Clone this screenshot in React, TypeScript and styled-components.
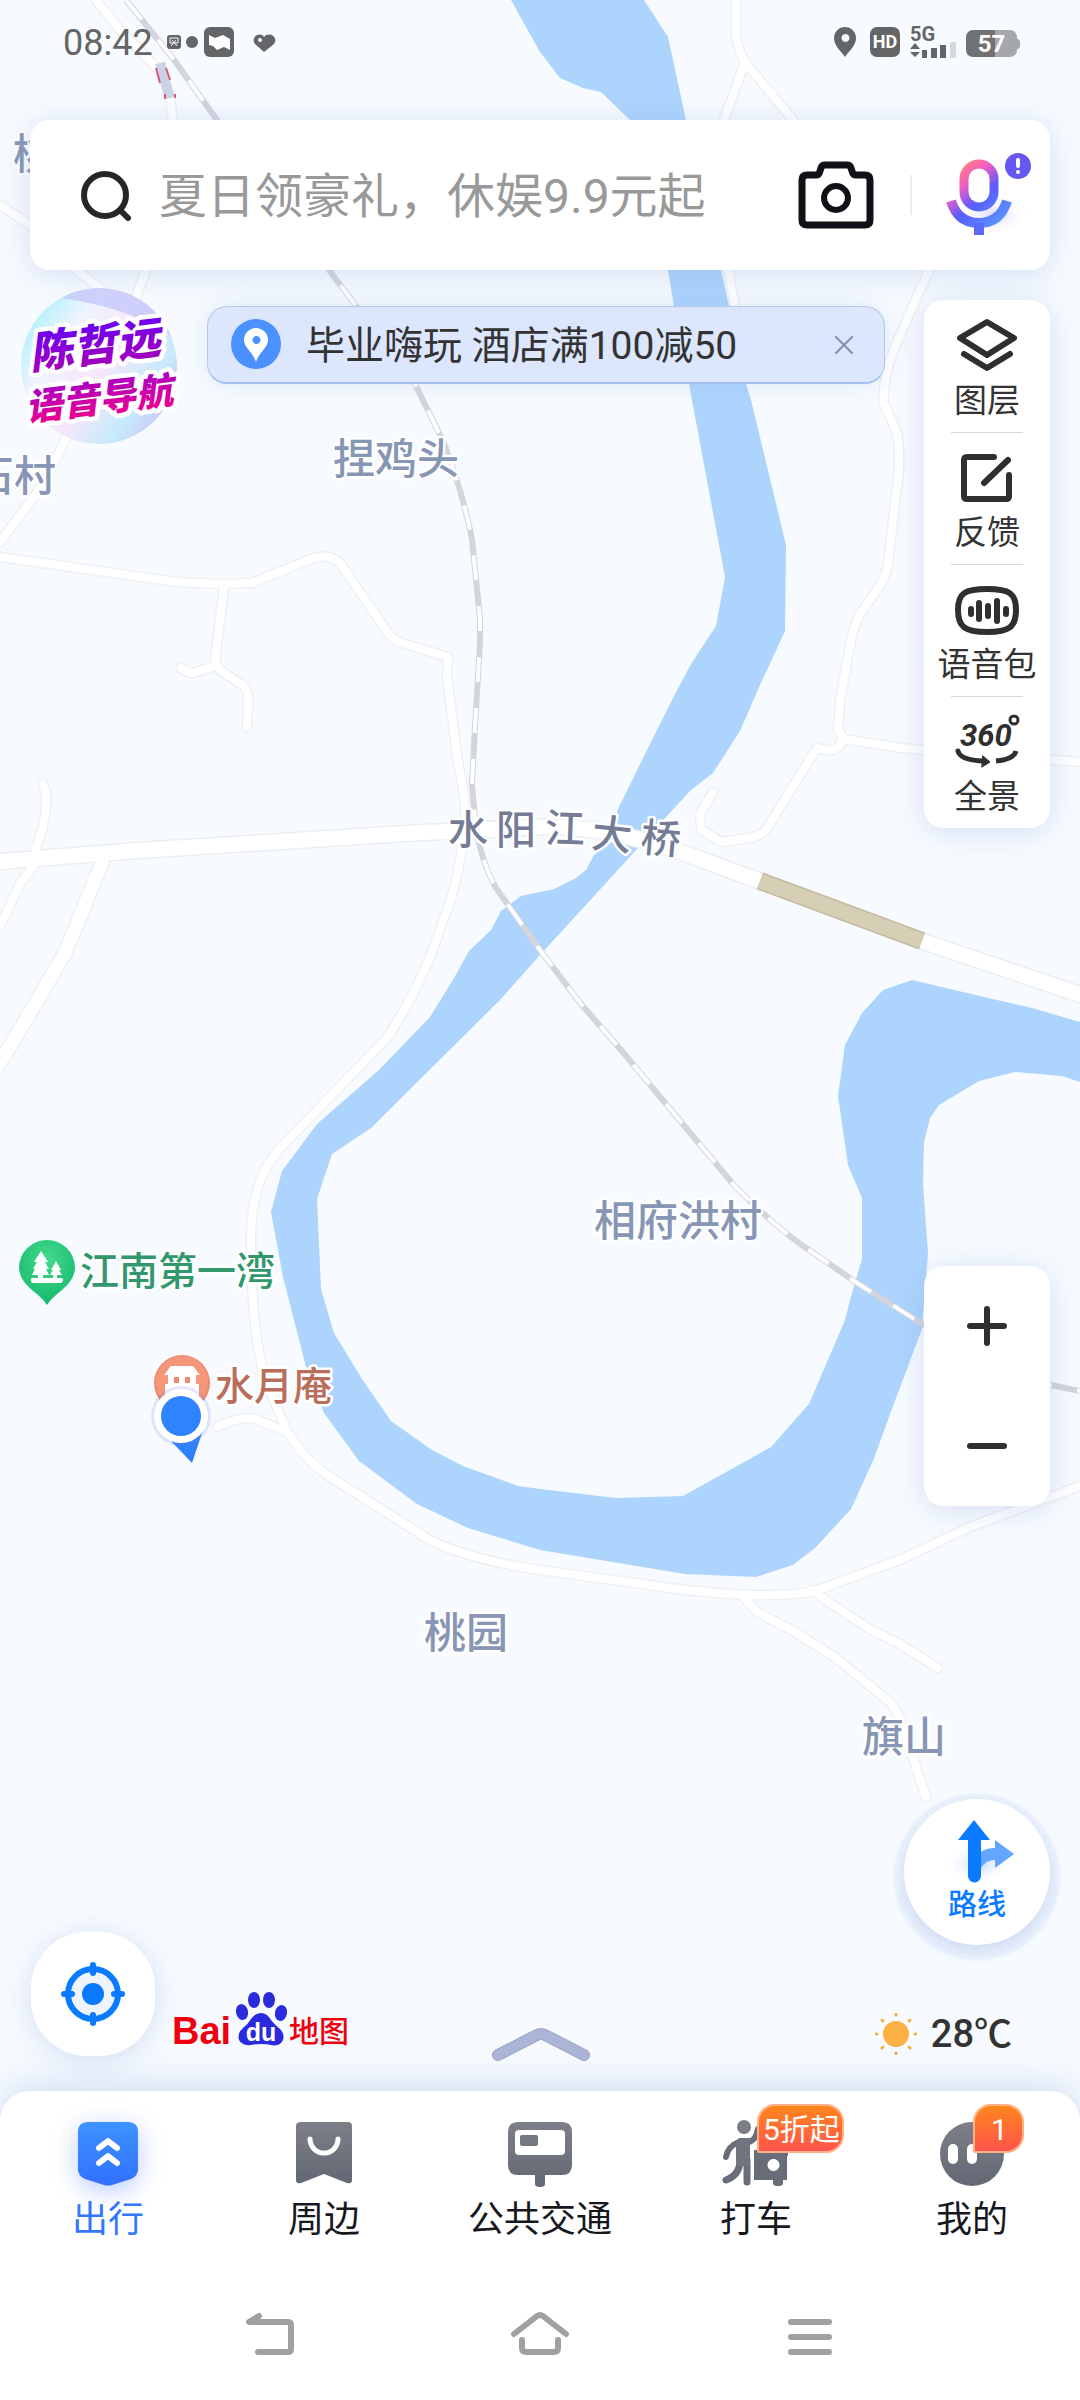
import React from "react";
import styled, { createGlobalStyle } from "styled-components";

const GlobalStyle = createGlobalStyle`
  * { box-sizing: border-box; }
  body {
    margin: 0;
    background: #f7fbff;
    font-family: Roboto, "Noto Sans CJK SC", sans-serif;
    color: #333;
  }
  button {
    margin: 0;
    padding: 0;
    border: 0;
    background: none;
    color: inherit;
    font: inherit;
    cursor: pointer;
  }
  svg { display: block; flex: none; }
`;

const cardShadow = "0 4px 30px rgba(130, 160, 215, 0.3)";

const Screen = styled.div`
  position: relative;
  display: flex;
  flex-direction: column;
  min-height: 100vh;
  overflow: hidden;
  isolation: isolate;
`;

/* ---------- map ---------- */

const MapLayer = styled.svg`
  position: absolute;
  inset: 0;
  z-index: -1;
  width: 100%;
  height: 100%;
`;

const MapLabel = styled.text<{ $tone: string; $size?: number }>`
  font-family: "Noto Sans CJK SC", sans-serif;
  font-size: ${(p) => p.$size ?? 42}px;
  font-weight: 500;
  fill: ${(p) => p.$tone};
  stroke: #fff;
  stroke-width: 5px;
  stroke-linejoin: round;
  paint-order: stroke;
`;

const water =
  "M511 0 L540 52 560 78 583 88 601 92 630 120 668 270 674 306 689 384 725 577 716 626 691 664 672 700 650 744 617 811 612 842 594 855 586 870 576 878 554 889 521 896 501 911 491 930 469 951 454 978 430 1017 379 1070 317 1124 282 1171 271 1212 283 1277 306 1367 324 1413 359 1461 417 1504 468 1528 540 1550 685 1574 756 1577 793 1565 815 1548 851 1509 873 1461 896 1398 922 1329 928 1253 923 1184 924 1142 930 1118 939 1105 979 1081 1015 1072 1062 1076 1080 1082 1080 1022 1032 1008 997 1000 912 980 883 990 862 1013 845 1045 838 1096 848 1165 862 1198 862 1259 850 1300 845 1320 809 1404 771 1447 683 1496 616 1498 540 1489 518 1486 463 1466 432 1450 391 1421 362 1379 334 1333 321 1289 317 1199 332 1154 371 1128 500 1000 540 955 638 848 667 816 691 790 713 773 740 731 760 685 785 631 786 545 751 400 746 384 729 306 721 270 686 120 668 37 644 0Z";

const roads = [
  "M0 557 L177 582 Q215 585 252 583 L306 561 Q328 551 340 563 L386 630 Q392 640 402 643 L448 657 447 677 458 762 Q466 800 465 819 Q460 880 444 918 Q425 980 387 1038 L324 1103 286 1142 Q251 1175 251 1237 Q251 1330 265 1379 L286 1429 Q300 1455 327 1475 L430 1540 Q470 1560 540 1570 L678 1589 Q770 1600 815 1591 L902 1559 970 1527 1080 1486",
  "M217 1427 Q240 1416 255 1419 L287 1432",
  "M743 1596 L757 1612 795 1632 836 1658 891 1703 Q898 1712 905 1733 L926 1797",
  "M812 1590 L833 1605 871 1630 898 1643 938 1668",
  "M224 587 L215 660 Q216 668 227 675 L244 686 Q249 692 248 704 L247 727",
  "M215 666 L193 673 Q188 673 181 668",
  "M146 270 L135 300 100 380 65 440 45 482 0 542",
  "M0 205 L30 225 77 270 106 293",
  "M96 0 L120 30 Q150 60 162 75 L170 98 173 120",
  "M736 0 L736 33 Q737 48 745 62 L724 120",
  "M745 62 L793 120",
  "M727 265 L736 310",
  "M929 270 L898 340 Q882 375 884 404 L896 430 Q900 445 899 469 L888 564 Q885 580 875 593 L860 614 Q852 630 850 645 L840 702 838 729 843 739 902 748 924 750 1080 762",
  "M843 737 Q840 752 826 750 L817 748 795 783 766 830 Q760 836 750 838 L721 842 702 830 Q699 820 701 813 L713 792",
  "M33 867 L21 882 0 926",
  "M36 849 Q45 825 46 807 Q47 792 43 784",
];

const mainRoad =
  "M-5 862 L131 851 413 833 540 827 Q600 825 678 851 L757 880 922 941 1090 998";
const rail =
  "M126 0 L172 57 217 120 329 270 356 306 415 384 444 443 Q462 490 472 539 L480 620 480 643 475 727 472 784 475 819 Q480 860 496 888 L540 950 581 1004 621 1050 702 1147 733 1184 Q775 1228 815 1254 L857 1283 924 1325 Q990 1368 1051 1385 L1080 1391";

const placeTone = "#8796b5";
const bridgeTone = "#747c96";

const bridgeName = [
  { ch: "水", x: 468, y: 829, r: 0 },
  { ch: "阳", x: 516, y: 829, r: 0 },
  { ch: "江", x: 565, y: 828, r: 2 },
  { ch: "大", x: 612, y: 834, r: 6 },
  { ch: "桥", x: 661, y: 838, r: 5 },
];

function CityMap() {
  return (
    <MapLayer viewBox="0 0 1080 2400" preserveAspectRatio="xMidYMin slice" role="img" aria-label="地图">
      <defs>
        <radialGradient id="park" cx="0.5" cy="0.3" r="0.8">
          <stop offset="0" stopColor="#45d98a" />
          <stop offset="1" stopColor="#0db56c" />
        </radialGradient>
      </defs>
      <rect width="1080" height="2400" fill="#f7fbff" />
      <path d={water} fill="#acd4fd" />
      <g fill="none" strokeLinecap="round" strokeLinejoin="round">
        {roads.map((d) => (
          <path key={d} d={d} stroke="#eff0f3" strokeWidth="11" />
        ))}
        <path d="M102 863 L65 953 14 1040 -4 1068" stroke="#eff0f3" strokeWidth="16" />
        <path d={mainRoad} stroke="#eceef2" strokeWidth="18" />
        {roads.map((d) => (
          <path key={d} d={d} stroke="#fff" strokeWidth="8" />
        ))}
        <path d="M102 863 L65 953 14 1040 -4 1068" stroke="#fff" strokeWidth="13" />
        <path d={mainRoad} stroke="#fff" strokeWidth="15" />
      </g>
      <path d="M760 881 L922 941" stroke="#c6bb9f" strokeWidth="18" />
      <path d="M760 881 L922 941" stroke="#d7ceb6" strokeWidth="15" />
      <path d="M160 63 L170 98" stroke="#c9d2e6" strokeWidth="10" />
      <path d="M156 68 L160 83 M166 68 L170 80 M165 94 L165 99 M175 94 L175 98" stroke="#dc5a78" strokeWidth="2" />
      <path d={rail} fill="none" stroke="#d3d4dc" strokeWidth="6" />
      <path d={rail} fill="none" stroke="#fff" strokeWidth="4" strokeDasharray="25 26" />

      <MapLabel $tone={placeTone} x="13" y="169">桃</MapLabel>
      <MapLabel $tone={placeTone} x="-28" y="491">石村</MapLabel>
      <MapLabel $tone={placeTone} x="333" y="474">捏鸡头</MapLabel>
      <MapLabel $tone={placeTone} x="594" y="1236">相府洪村</MapLabel>
      <MapLabel $tone={placeTone} x="424" y="1648">桃园</MapLabel>
      <MapLabel $tone={placeTone} x="862" y="1752">旗山</MapLabel>
      {bridgeName.map((c) => (
        <MapLabel
          key={c.ch}
          $tone={bridgeTone}
          $size={40}
          textAnchor="middle"
          transform={`translate(${c.x} ${c.y}) rotate(${c.r})`}
          y="15"
        >
          {c.ch}
        </MapLabel>
      ))}

      <path d="M47 1240 a28 28 0 0 1 28 27 c0 14 -12 22 -19 28 q-6 5 -9 10 q-3 -5 -9 -10 c-7 -6 -19 -14 -19 -28 a28 28 0 0 1 28 -27Z" fill="url(#park)" />
      <path d="M41 1251 l7 11 h-3 l4 7 h-3 l3 6 h-6 v3 h10 v-3 h-3 l3 -5 h-2 l5 -9 5 9 h-2 l3 5 h-5 v3 h4 q2 0 2 2 t-2 3 h-28 q-2 0 -2 -3 t2 -2 h5 v-3 h-6 l3 -6 h-2 l4 -7 h-3Z" fill="#fff" />
      <MapLabel $tone="#33976d" $size={39} x="80" y="1285">江南第一湾</MapLabel>

      <circle cx="182" cy="1383" r="28" fill="#ec8a6d" />
      <circle cx="182" cy="1382" r="26" fill="#f3967a" />
      <path d="M168 1370 q2 -4 4 -4 h20 q2 0 4 4 l4 5 h-4 v9 h3 v12 h-34 v-12 h3 v-9 h-4Z" fill="#fff" />
      <path d="M174 1377 h5 v6 h-5Z M185 1377 h5 v6 h-5Z" fill="#ec8a6d" />
      <MapLabel $tone="#b96e5c" $size={39} x="215" y="1400">水月庵</MapLabel>

      <path d="M170 1440 L192 1463 203 1430Z" fill="#2f80fb" />
      <circle cx="181" cy="1416" r="30" fill="#6f7df0" opacity="0.18" />
      <circle cx="181" cy="1416" r="27" fill="#fff" />
      <circle cx="181" cy="1416" r="20" fill="#2f83ff" />
    </MapLayer>
  );
}

/* ---------- status bar ---------- */

const StatusBar = styled.header`
  display: flex;
  align-items: center;
  justify-content: space-between;
  height: 84px;
  margin-bottom: 36px;
  padding: 0 60px 0 63px;
  color: #636567;
`;

const StatusGroup = styled.div`
  display: flex;
  align-items: center;
`;

const Clock = styled.time`
  margin-top: 2px;
  margin-right: 14px;
  font-size: 36px;
  line-height: 44px;
`;

function StatusIcons() {
  return (
    <svg width="110" height="30" viewBox="0 0 110 30" aria-hidden="true">
      <rect y="8" width="14" height="14" rx="3" fill="#636567" />
      <path d="M3 11 h8 v5 h-8Z M5 13 l5 6 M9 13 l-5 6" stroke="#f7fbff" strokeWidth="1" fill="none" />
      <circle cx="25" cy="15" r="6" fill="#636567" />
      <rect x="37" width="30" height="30" rx="6" fill="#636567" />
      <path d="M42 8 l6 3 8 -3 7 4 v11 l-6 -3 -7 3 -4 -4 -4 -1Z" fill="#fff" />
      <path d="M97 25 l-9 -8 c-5 -7 5 -13 9 -7 c5 -6 15 0 10 7Z" fill="#636567" />
      <circle cx="93" cy="13" r="2" fill="#f7fbff" />
    </svg>
  );
}

const HdTag = styled.span`
  width: 30px;
  margin: 0 10px 0 13px;
  border-radius: 7px;
  background: #636567;
  color: #fff;
  font-size: 18px;
  font-weight: 700;
  line-height: 30px;
  text-align: center;
`;

const Signal = styled.div`
  display: flex;
  flex-direction: column;
  width: 46px;
  margin-right: 10px;
  font-size: 20px;
  font-weight: 700;
  line-height: 15px;
`;

const Battery = styled.div`
  width: 51px;
  height: 27px;
  margin-top: 3px;
  border-radius: 7px;
  background: linear-gradient(90deg, #6f7173 57%, #a5a7aa 57%);
  color: #fff;
  font-size: 24px;
  font-weight: 700;
  line-height: 28px;
  text-align: center;
`;

const BatteryTip = styled.span`
  width: 3px;
  height: 10px;
  margin-top: 3px;
  border-radius: 0 3px 3px 0;
  background: #a5a7aa;
`;

/* ---------- search ---------- */

const SearchForm = styled.form`
  display: flex;
  align-items: center;
  height: 150px;
  margin: 0 30px;
  padding: 0 18px 0 50px;
  border-radius: 20px;
  background: #fff;
  box-shadow: ${cardShadow};
`;

const SearchInput = styled.input`
  flex: 1;
  min-width: 0;
  height: 72px;
  margin: 2px 20px 0 27px;
  padding: 0;
  border: 0;
  outline: 0;
  background: none;
  color: #333;
  font: inherit;
  font-size: 48px;
  &::placeholder { color: #999; opacity: 1; }
`;

const SearchDivider = styled.span`
  width: 2px;
  height: 40px;
  margin: 0 30px 0 36px;
  background: #ececee;
`;

/* ---------- promo row and tool rail ---------- */

const TopRow = styled.div`
  display: flex;
  align-items: flex-start;
  padding: 18px 30px 0 21px;
`;

const Banner = styled.div`
  display: flex;
  flex: 1;
  align-items: center;
  height: 78px;
  margin: 18px 39px 0 30px;
  padding: 0 12px 0 23px;
  border: 1px solid #b3c7ef;
  border-bottom: 2px solid #a5bff5;
  border-radius: 20px;
  background: #dce6fd;
  box-shadow: 0 0 24px rgba(130, 160, 215, 0.2);
`;

const BannerText = styled.span`
  flex: 1;
  margin-left: 24px;
  padding-top: 2px;
  font-size: 39px;
  line-height: 56px;
  white-space: nowrap;
`;

const CloseButton = styled.button`
  display: grid;
  place-items: center;
  width: 56px;
  height: 56px;
`;

const Card = styled.div`
  width: 126px;
  border-radius: 20px;
  background: #fff;
  box-shadow: ${cardShadow};
`;

const ToolRail = styled(Card)`
  margin-top: 12px;
`;

const ToolButton = styled.button`
  position: relative;
  display: flex;
  flex-direction: column;
  align-items: center;
  width: 100%;
  height: 132px;
  padding-top: 18px;
  font-size: 33px;
  line-height: 58px;
  white-space: nowrap;
  & + &::before {
    content: "";
    position: absolute;
    top: 0;
    left: 27px;
    right: 27px;
    height: 1px;
    background: #d8d8da;
  }
`;

const ZoomCard = styled(Card)`
  margin-bottom: 293px;
`;

const ZoomButton = styled.button`
  display: grid;
  place-items: center;
  width: 100%;
  height: 120px;
`;

/* ---------- lower overlay ---------- */

const Lower = styled.main`
  display: grid;
  flex: 1;
  grid-template-columns: 1fr auto 1fr;
  align-items: end;
  padding: 0 30px 29px 31px;
`;

const LocateGroup = styled.div`
  display: flex;
  align-items: flex-end;
  margin-bottom: 6px;
`;

const LocateButton = styled.button`
  display: grid;
  place-items: center;
  width: 124px;
  height: 124px;
  margin-right: 16px;
  border-radius: 56px;
  background: #fff;
  box-shadow: ${cardShadow};
`;

const RightColumn = styled.div`
  display: flex;
  flex-direction: column;
  align-items: flex-end;
  margin-bottom: 6px;
`;

const RouteButton = styled.button`
  display: flex;
  flex-direction: column;
  align-items: center;
  width: 146px;
  height: 146px;
  padding-top: 19px;
  border-radius: 50%;
  background: #fff;
  box-shadow: 0 5px 2px 10px rgba(150, 180, 235, 0.12), 0 6px 16px rgba(130, 155, 215, 0.28);
  color: #0a7bff;
  font-size: 29px;
  font-weight: 500;
  line-height: 42px;
`;

const Weather = styled.div`
  display: flex;
  align-items: center;
  gap: 14px;
  margin-top: 67px;
  margin-right: 38px;
  font-size: 38px;
  font-weight: 500;
  line-height: 44px;
`;

/* ---------- bottom sheet ---------- */

const Sheet = styled.footer`
  border-radius: 30px 30px 0 0;
  background: #fff;
  box-shadow: 0 -4px 36px rgba(130, 160, 215, 0.35);
`;

const TabBar = styled.nav`
  display: grid;
  grid-template-columns: repeat(5, 1fr);
  padding: 29px 0 30px;
`;

const Tab = styled.button<{ $active?: boolean }>`
  display: flex;
  flex-direction: column;
  align-items: center;
  gap: 10px;
  color: ${(p) => (p.$active ? "#3377ff" : "#16181d")};
  font-size: 36px;
  line-height: 44px;
  white-space: nowrap;
`;

const TabIcon = styled.span<{ $glow?: boolean }>`
  position: relative;
  width: 68px;
  height: 68px;
  filter: ${(p) => (p.$glow ? "drop-shadow(0 6px 12px rgba(60, 110, 255, 0.35))" : "none")};
`;

const Badge = styled.span`
  position: absolute;
  top: -16px;
  left: 35px;
  min-width: 51px;
  height: 49px;
  padding: 0 2px 0 4px;
  border: 2px solid #ffb183;
  border-radius: 18px 18px 18px 2px;
  background: linear-gradient(#ff861c, #ff544c);
  color: #fff;
  font-size: 30px;
  line-height: 48px;
  text-align: center;
`;

const SystemNav = styled.nav`
  display: grid;
  grid-template-columns: repeat(3, 1fr);
  height: 128px;
  padding: 0 12.5% 6px;
`;

const SystemButton = styled.button`
  display: grid;
  place-items: center;
`;

/* ---------- icons ---------- */

const ink = "#2f2f30";

function VoiceStar() {
  return (
    <svg width="156" height="156" viewBox="0 0 156 156" overflow="visible">
      <defs>
        <linearGradient id="bubble" x1="0" y1="0.2" x2="1" y2="0.9">
          <stop offset="0" stopColor="#a8f0fa" />
          <stop offset="0.25" stopColor="#eff4ff" />
          <stop offset="0.5" stopColor="#f7e6fa" />
          <stop offset="0.75" stopColor="#c6ebfb" />
          <stop offset="1" stopColor="#cbb8f6" />
        </linearGradient>
        <linearGradient id="nameFill" x1="0" y1="0" x2="0" y2="1">
          <stop offset="0.2" stopColor="#6b00f2" />
          <stop offset="1" stopColor="#b000b0" />
        </linearGradient>
        <linearGradient id="voiceFill" x1="0" y1="0" x2="0" y2="1">
          <stop offset="0.1" stopColor="#a000c8" />
          <stop offset="0.9" stopColor="#f0008f" />
        </linearGradient>
      </defs>
      <circle cx="78" cy="78" r="78" fill="url(#bubble)" />
      <path d="M40 10 A78 78 0 0 1 150 48 Q110 20 40 10Z" fill="#c4c8fa" opacity="0.8" />
      <g
        fontFamily="'Noto Sans CJK SC', sans-serif"
        fontWeight="900"
        stroke="#fff"
        strokeWidth="9"
        strokeLinejoin="round"
        paintOrder="stroke"
      >
        <text transform="translate(10 81) rotate(-7)" fontSize="44" fontStyle="italic" fill="url(#nameFill)">陈哲远</text>
        <text transform="translate(6 133) rotate(-7)" fontSize="37" fontStyle="italic" fill="url(#voiceFill)">语音导航</text>
      </g>
    </svg>
  );
}

function SearchIcon() {
  return (
    <svg width="52" height="52" viewBox="0 0 52 52" fill="none" stroke="#262626" strokeWidth="6" strokeLinecap="round" aria-hidden="true">
      <circle cx="25" cy="26" r="21" />
      <path d="M41 42 l7 7" />
    </svg>
  );
}

function CameraIcon() {
  return (
    <svg width="76" height="68" viewBox="0 0 76 68" fill="none" stroke="#101116" strokeWidth="7" strokeLinejoin="round">
      <path d="M9 14 h10 q2 0 3 -4 l1 -3 q1 -3 4 -3 h22 q3 0 4 3 l1 3 q1 4 3 4 h10 q5 0 5 5 v40 q0 5 -5 5 h-58 q-5 0 -5 -5 v-40 q0 -5 5 -5Z" />
      <circle cx="38" cy="37" r="12" strokeWidth="6" />
    </svg>
  );
}

function MicIcon() {
  return (
    <svg width="90" height="84" viewBox="0 0 90 84">
      <defs>
        <linearGradient id="mic" gradientUnits="userSpaceOnUse" x1="12" y1="12" x2="58" y2="66">
          <stop offset="0" stopColor="#ff8a70" />
          <stop offset="0.3" stopColor="#f65cc0" />
          <stop offset="0.6" stopColor="#5a5cff" />
          <stop offset="1" stopColor="#5a90ff" />
        </linearGradient>
        <radialGradient id="micGlow">
          <stop offset="0" stopColor="#c9c6ff" stopOpacity="0.7" />
          <stop offset="1" stopColor="#fff" stopOpacity="0" />
        </radialGradient>
      </defs>
      <ellipse cx="52" cy="62" rx="36" ry="20" fill="url(#micGlow)" />
      <rect x="22" y="11" width="30" height="43" rx="15" fill="none" stroke="url(#mic)" strokeWidth="9" />
      <path d="M9 48 Q16 70 37 70 Q58 70 65 48" fill="none" stroke="url(#mic)" strokeWidth="10" />
      <path d="M32 70 h10 v12 h-10Z" fill="#5a6aff" />
      <circle cx="76" cy="13" r="13" fill="#6657f0" />
      <path d="M76 7 v6 M76 19 v0" stroke="#fff" strokeWidth="4" strokeLinecap="round" />
    </svg>
  );
}

function ToolIcon({ children }: { children: React.ReactNode }) {
  return (
    <svg width="66" height="54" viewBox="0 0 66 54" fill="none" stroke={ink} strokeWidth="6" strokeLinecap="round" strokeLinejoin="round" aria-hidden="true">
      {children}
    </svg>
  );
}

const tools = [
  {
    name: "图层",
    icon: (
      <ToolIcon>
        <path d="M33 4 L60 20 33 37 6 20Z M10 36 L33 50 56 36" />
      </ToolIcon>
    ),
  },
  {
    name: "反馈",
    icon: (
      <ToolIcon>
        <path d="M40 7 H13 q-3 0 -3 3 V46 q0 3 3 3 H52 q3 0 3 -3 V25 M30 33 L54 10" />
      </ToolIcon>
    ),
  },
  {
    name: "语音包",
    icon: (
      <ToolIcon>
        <path d="M33 7 C55 7 62 11 62 28 S55 50 33 50 4 45 4 28 11 7 33 7Z" />
        <path d="M17 27 v5 M25 21 v16 M34 24 v10 M43 19 v20 M52 27 v5" />
      </ToolIcon>
    ),
  },
  {
    name: "全景",
    icon: (
      <ToolIcon>
        <text x="6" y="32" fontFamily="Roboto, sans-serif" fontSize="31" fontWeight="700" fontStyle="italic" fill={ink} stroke="none">360</text>
        <circle cx="60" cy="6" r="4" strokeWidth="3" />
        <path d="M4 37 Q6 46 29 47" strokeWidth="5" />
        <path d="M62 37 Q60 45 42 47" strokeWidth="5" strokeLinecap="butt" />
        <path d="M29 42 L36 48 28 53Z" fill={ink} strokeWidth="1" />
      </ToolIcon>
    ),
  },
];

function BaiduLogo() {
  return (
    <svg width="180" height="64" viewBox="0 0 180 64" role="img" aria-label="Baidu地图">
      <g fill="#f0000f" fontWeight="700">
        <text x="1" y="52" fontFamily="'Liberation Sans', sans-serif" fontSize="38">Bai</text>
        <text x="118" y="50" fontFamily="'Noto Sans CJK SC', sans-serif" fontSize="30" fontWeight="500">地图</text>
      </g>
      <g fill="#2a2bdd" transform="translate(3 0)">
        <ellipse cx="68" cy="20" rx="6" ry="8" transform="rotate(-12 68 20)" />
        <ellipse cx="80" cy="8" rx="6" ry="8" />
        <ellipse cx="95" cy="8" rx="6" ry="8" />
        <ellipse cx="107" cy="21" rx="6" ry="8" transform="rotate(12 107 21)" />
        <path d="M87 21 q6 0 10 7 q4 5 9 9 q5 5 3 11 q-3 7 -12 5 q-10 -2 -20 0 q-9 1 -12 -5 q-2 -7 4 -12 q5 -4 8 -9 q4 -6 10 -6Z" />
      </g>
      <text x="90" y="49" textAnchor="middle" fill="#fff" fontFamily="'Liberation Sans', sans-serif" fontSize="25" fontWeight="700">du</text>
    </svg>
  );
}

const GrayFill = () => (
  <defs>
    <linearGradient id="tabGray" x1="0" y1="0" x2="0" y2="1">
      <stop offset="0" stopColor="#7d7f88" />
      <stop offset="1" stopColor="#626874" />
    </linearGradient>
    <linearGradient id="tabBlue" x1="0" y1="0" x2="0" y2="1">
      <stop offset="0" stopColor="#3d93ff" />
      <stop offset="1" stopColor="#3270ff" />
    </linearGradient>
  </defs>
);

const tabs = [
  {
    name: "出行",
    active: true,
    art: (
      <>
        <path d="M14 2 H54 q10 0 10 10 V49 q0 7 -7 10 L38 65 q-4 1 -8 0 L11 59 q-7 -3 -7 -10 V12 q0 -10 10 -10Z" fill="url(#tabBlue)" />
        <path d="M25 28 L34 21 43 28 M25 43 L34 36 43 43" fill="none" stroke="#fff" strokeWidth="6" strokeLinecap="round" strokeLinejoin="round" />
      </>
    ),
  },
  {
    name: "周边",
    art: (
      <>
        <path d="M11 2 H58 q4 0 4 4 V60 q0 4 -5 3 L34 54 11 63 q-5 1 -5 -3 V6 q0 -4 5 -4Z" fill="url(#tabGray)" />
        <path d="M20 19 a14 14 0 0 0 28 0" fill="none" stroke="#fff" strokeWidth="5" strokeLinecap="round" />
      </>
    ),
  },
  {
    name: "公共交通",
    art: (
      <>
        <path d="M12 2 H56 q10 0 10 10 V45 q0 10 -10 10 H39 V64 q0 3 -5 3 t-5 -3 V55 H12 Q2 55 2 45 V12 Q2 2 12 2Z" fill="url(#tabGray)" />
        <rect x="9" y="10" width="50" height="25" rx="4" fill="#fff" />
        <rect x="14" y="15" width="18" height="11" rx="2" fill="#747882" />
      </>
    ),
  },
  {
    name: "打车",
    badge: "5折起",
    art: (
      <>
        <g stroke="#686e79" fill="none" strokeLinecap="round" strokeLinejoin="round">
          <path d="M17 22 Q6 26 4 37 M27 22 Q34 20 36 9" strokeWidth="6" />
          <path d="M18 40 Q18 55 4 60 M25 40 V62" strokeWidth="7" />
        </g>
        <circle cx="22" cy="7" r="7" fill="#7b7e87" />
        <path d="M17 18 H28 V46 H14 V22Z" fill="#71757f" />
        <path fillRule="evenodd" d="M32 30 H66 v6 h-1 V60 H61 v3 q0 3 -4 3 h-2 q-4 0 -4 -3 v-3 H32Z M51 39 a6 6 0 1 0 1 0Z" fill="#686e79" />
      </>
    ),
  },
  {
    name: "我的",
    badge: "1",
    art: (
      <>
        <circle cx="34" cy="34" r="32" fill="url(#tabGray)" />
        <rect x="10" y="24" width="10" height="20" rx="5" fill="#fff" />
        <rect x="29" y="24" width="10" height="20" rx="5" fill="#fff" />
      </>
    ),
  },
];

const SystemIcon = ({ d }: { d: string }) => (
  <svg width="60" height="52" viewBox="0 0 60 52" fill="none" stroke="#a0a0a0" strokeWidth="6" strokeLinecap="round" strokeLinejoin="round" aria-hidden="true">
    <path d={d} />
  </svg>
);

const systemKeys = [
  { name: "返回", d: "M19 9 L9 15 H48 q3 0 3 3 V42 q0 3 -3 3 H18" },
  { name: "主页", d: "M4 27 L27 9 q3 -2 6 0 L56 27 M12 33 V41 q0 4 4 4 H44 q4 0 4 -4 V33" },
  { name: "最近任务", d: "M11 15 H49 M11 30 H49 M11 45 H49" },
];

export default function App() {
  return (
    <Screen>
      <GlobalStyle />
      <CityMap />

      <StatusBar>
        <StatusGroup>
          <Clock>08:42</Clock>
          <StatusIcons />
        </StatusGroup>
        <StatusGroup>
          <svg width="23" height="30" viewBox="0 0 23 30" aria-hidden="true">
            <path fillRule="evenodd" d="M11 0 a11 11 0 0 1 11 11 c0 8 -8 14 -11 19 c-3 -5 -11 -11 -11 -19 a11 11 0 0 1 11 -11Z M11 7 a4 4 0 1 0 1 0Z" fill="#636567" />
          </svg>
          <HdTag>HD</HdTag>
          <Signal>
            5G
            <svg width="46" height="16" viewBox="0 0 46 16" aria-hidden="true">
              <path d="M5 1 l5 6 h-10Z M5 15 l5 -5 h-10Z M12 8 h5 v8 h-5Z M21 6 h6 v10 h-6Z M30 3 h6 v13 h-6Z" fill="#636567" />
              <rect x="40" width="6" height="16" rx="2" fill="#d5d8dc" />
            </svg>
          </Signal>
          <Battery>57</Battery>
          <BatteryTip />
        </StatusGroup>
      </StatusBar>

      <SearchForm role="search" onSubmit={(e) => e.preventDefault()}>
        <SearchIcon />
        <SearchInput type="text" aria-label="搜索" placeholder="夏日领豪礼，休娱9.9元起" />
        <button type="button" aria-label="拍照"><CameraIcon /></button>
        <SearchDivider />
        <button type="button" aria-label="语音"><MicIcon /></button>
      </SearchForm>

      <TopRow>
        <button type="button"><VoiceStar /></button>
        <Banner>
          <svg width="51" height="51" viewBox="0 0 51 51" aria-hidden="true">
            <circle cx="25" cy="25" r="25" fill="#4a91ff" />
            <path fillRule="evenodd" d="M25 9 a12 12 0 0 1 12 12 c0 8 -9 12 -12 22 c-3 -10 -12 -14 -12 -22 a12 12 0 0 1 12 -12Z M25 17 a4 4 0 1 0 1 0Z" fill="#fff" />
          </svg>
          <BannerText>毕业嗨玩 酒店满100减50</BannerText>
          <CloseButton type="button" aria-label="关闭">
            <svg width="20" height="20" viewBox="0 0 20 20" stroke="#7f90b5" strokeWidth="2" strokeLinecap="round">
              <path d="M2 2 L18 18 M18 2 L2 18" />
            </svg>
          </CloseButton>
        </Banner>
        <ToolRail>
          {tools.map((t) => (
            <ToolButton type="button" key={t.name}>
              {t.icon}
              {t.name}
            </ToolButton>
          ))}
        </ToolRail>
      </TopRow>

      <Lower>
        <LocateGroup>
          <LocateButton type="button" aria-label="定位">
            <svg width="64" height="64" viewBox="0 0 64 64" fill="none" stroke="#0a7bff" strokeWidth="6" strokeLinecap="round">
              <circle cx="32" cy="32" r="25" fill="#f0f4ff" />
              <path d="M32 3 v8 M32 53 v8 M3 32 h8 M53 32 h8" />
              <circle cx="32" cy="32" r="11" fill="#0a7bff" stroke="none" />
            </svg>
          </LocateButton>
          <BaiduLogo />
        </LocateGroup>
        <button type="button" aria-label="展开">
          <svg width="100" height="36" viewBox="0 0 100 36" fill="none" strokeLinecap="round" strokeLinejoin="round">
            <path d="M7 29 L46 9 q4 -2 8 0 L93 29" stroke="#98a3c6" strokeWidth="12" />
            <path d="M7 29 L46 9 q4 -2 8 0 L93 29" stroke="#acb5d5" strokeWidth="10" />
          </svg>
        </button>
        <RightColumn>
          <ZoomCard>
            <ZoomButton type="button" aria-label="放大">
              <svg width="40" height="40" viewBox="0 0 40 40" stroke={ink} strokeWidth="6" strokeLinecap="round">
                <path d="M3 20 H37 M20 3 V37" />
              </svg>
            </ZoomButton>
            <ZoomButton type="button" aria-label="缩小">
              <svg width="40" height="40" viewBox="0 0 40 40" stroke={ink} strokeWidth="6" strokeLinecap="round">
                <path d="M3 20 H37" />
              </svg>
            </ZoomButton>
          </ZoomCard>
          <RouteButton type="button">
            <svg width="74" height="66" viewBox="0 0 74 66" aria-hidden="true">
              <defs>
                <radialGradient id="routeGlow">
                  <stop offset="0" stopColor="#a9c6ff" stopOpacity="0.7" />
                  <stop offset="1" stopColor="#fff" stopOpacity="0" />
                </radialGradient>
              </defs>
              <ellipse cx="38" cy="46" rx="34" ry="20" fill="url(#routeGlow)" />
              <path d="M41 50 V34 Q46 30 55 30 V22 L74 36 55 50 V42 Q46 42 41 50Z" fill="#62a6ff" />
              <path d="M34 2 L50 22 H41 V58 a6 6 0 0 1 -13 0 V22 H18Z" fill="#0a7bff" />
            </svg>
            路线
          </RouteButton>
          <Weather>
            <svg width="42" height="42" viewBox="0 0 42 42" aria-hidden="true">
              <circle cx="21" cy="21" r="13" fill="#fdb044" />
              <path d="M21 1 v1 M21 40 v1 M1 21 h1 M40 21 h1 M7 7 l1 1 M34 34 l1 1 M7 35 l1 -1 M34 8 l1 -1" stroke="#eab54f" strokeWidth="3" strokeLinecap="round" />
            </svg>
            28℃
          </Weather>
        </RightColumn>
      </Lower>

      <Sheet>
        <TabBar>
          {tabs.map((t) => (
            <Tab type="button" key={t.name} $active={t.active}>
              <TabIcon $glow={t.active}>
                <svg width="68" height="68" viewBox="0 0 68 68" aria-hidden="true">
                  <GrayFill />
                  {t.art}
                </svg>
                {t.badge && <Badge>{t.badge}</Badge>}
              </TabIcon>
              {t.name}
            </Tab>
          ))}
        </TabBar>
        <SystemNav>
          {systemKeys.map((k) => (
            <SystemButton type="button" key={k.name} aria-label={k.name}>
              <SystemIcon d={k.d} />
            </SystemButton>
          ))}
        </SystemNav>
      </Sheet>
    </Screen>
  );
}
